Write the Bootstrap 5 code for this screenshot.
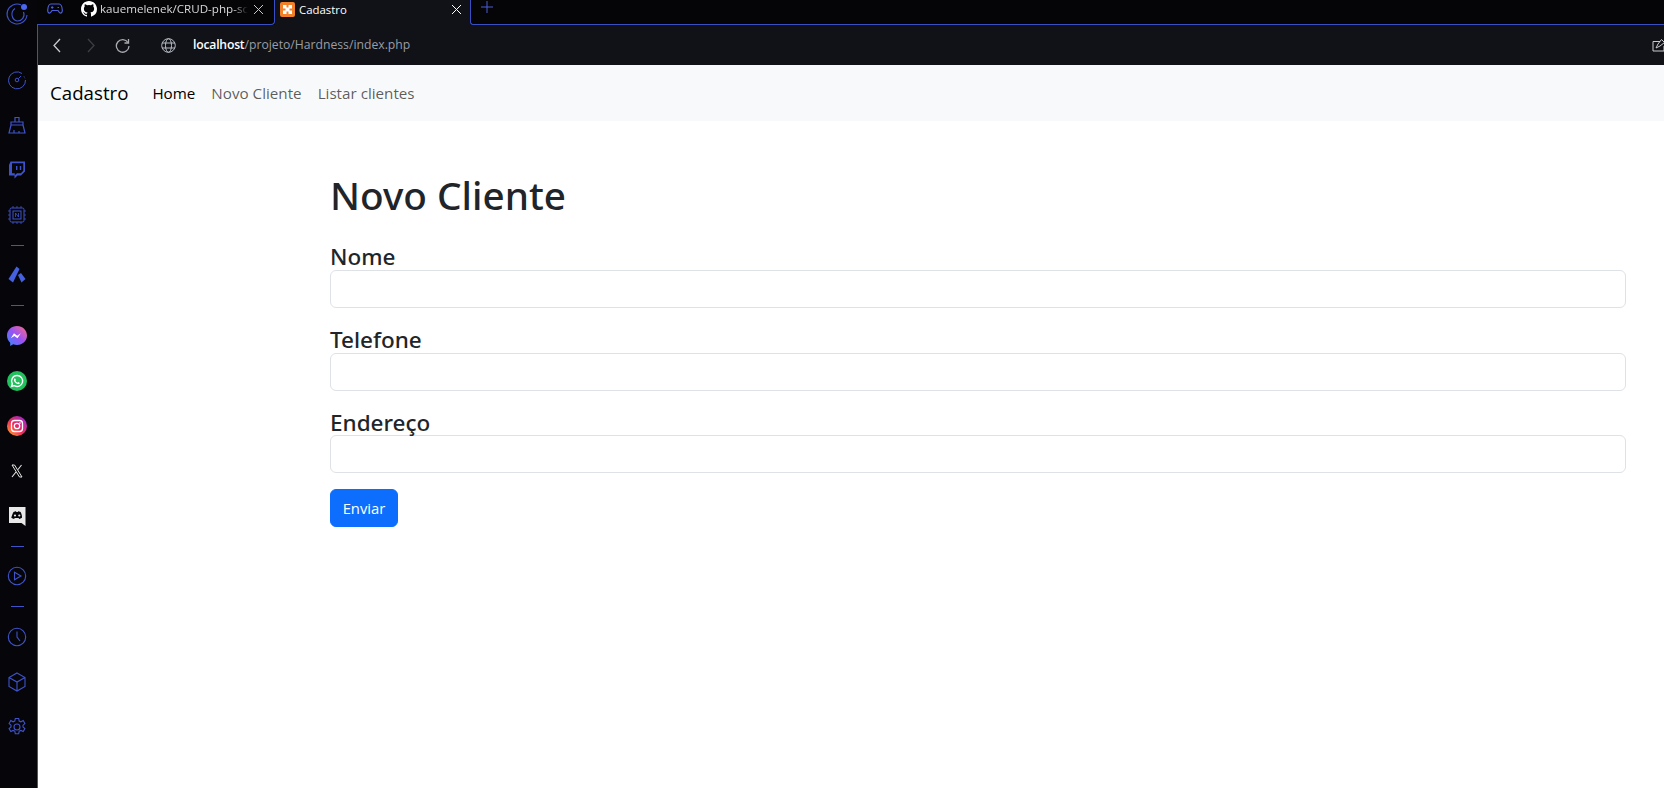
<!DOCTYPE html>
<html lang="pt-BR">
<head>
    <meta charset="UTF-8" />
    <title>Cadastro</title>
    <meta name="viewport" content="width=device-width, initial-scale=1" />
    <link href="https://cdn.jsdelivr.net/npm/bootstrap@5.3.2/dist/css/bootstrap.min.css" rel="stylesheet">
    <style>
        html, body { height: 100%; overflow: hidden; }
        body { background: #06060a; font-family: "Open Sans", "Noto Sans", sans-serif; }
        .side-rail { width: 37px; flex: none; background: #06060a; color: #3f53c9; padding-right: 3px; }
        .rail-logo { height: 28px; flex: none; }
        .rail-gap { height: 29px; flex: none; }
        .rail-item { height: 45.2px; width: 100%; flex: none; }
        .rail-dash { height: 16px; margin: -0.5px 0; flex: none; }
        .rail-dash::before { content: ""; width: 13px; height: 1px; background: #3f53c9; }
        .rail-item svg { width: 20px; height: 20px; }
        .main-pane { min-width: 0; }
        .tab-strip { height: 25px; background: #050508; color: #fff; font-size: 11.6px; }
        .tab-idle { width: 238px; height: 25px; border-bottom: 1px solid #3a4fc4; border-right: 1px solid #3a4fc4; border-bottom-right-radius: 4px; padding: 0 0 6px 10px; }
        .tab-now { width: 195px; height: 25px; background: #101218; padding: 0 0 6px 5px; }
        .tab-now span { font-size: 11.4px; }
        .tab-rest { height: 25px; border-bottom: 1px solid #3a4fc4; border-left: 1px solid #3a4fc4; border-bottom-left-radius: 3px; padding: 1px 0 0 10px; }
        .tab-title { overflow: hidden; white-space: nowrap; color: #d8d8d8; margin-left: 3px;
            -webkit-mask-image: linear-gradient(90deg, #000 90%, transparent); mask-image: linear-gradient(90deg, #000 90%, transparent); }
        .addr-bar { height: 40px; background: #101218; border-left: 1px solid #3a4fc4; color: #b9bcc4; padding-left: 14px; }
        .addr-text { font-size: 12.2px; color: #9a9da5; margin-left: 17px; }
        .addr-text b { color: #fff; font-weight: 600; letter-spacing: -0.2px; }
        .page-area { background: #fff; border-left: 1px solid #3a4fc4; min-height: 0; }
        .top-nav { height: 56px; padding: 1px 12px 0; }
        .top-nav .navbar-brand { font-size: 18.7px; margin-right: 16px; padding: 0; }
        .top-nav .nav-link { font-size: 15.2px; padding: 8px; }
        .form-wrap { margin: 50px 0 0 292px; width: 1296px; font-family: "Noto Sans", "Open Sans", sans-serif; }
        .form-wrap h1 { font-size: 38.7px; font-weight: 500; line-height: 48px; margin-bottom: 22px; color: #212529; }
        .field-label { display: block; font-size: 22.5px; font-weight: 500; line-height: 24.8px; padding-top: 4px; color: #212529; }
        .form-wrap .form-control { height: 38px; }
        .form-wrap .btn { height: 38px; width: 68px; padding: 0; font-size: 14.8px; font-family: "Open Sans", sans-serif; }
    </style>
</head>
<body class="d-flex">

<!-- Browser side rail -->
<aside class="side-rail d-flex flex-column align-items-center">
    <div class="rail-logo d-flex align-items-center justify-content-center w-100">
        <svg width="24" height="24" viewBox="0 0 24 24" fill="none" stroke="#3f53c9" stroke-width="1.100"><path d="M16 2.800A10 10 0 1 0 22 13"/><path d="M10 6.500A7 7 0 0 0 12 19A6.500 6.500 0 0 0 18.500 10"/><circle cx="19" cy="5" r="3" fill="#4a66f0" stroke="none"/></svg>
    </div>
    <div class="rail-gap"></div>
    <div class="rail-item d-flex align-items-center justify-content-center">
        <svg viewBox="0 0 20 20" fill="none" stroke="currentColor" stroke-width="1"><path d="M15 3.500A8.500 8.500 0 1 0 18.500 10" /><circle cx="10" cy="10" r="1.800"/><path d="M11.500 8.500L14 6"/><path d="M17 6.500l1 2" stroke-dasharray="1 1"/></svg>
    </div>
    <div class="rail-item d-flex align-items-center justify-content-center">
        <svg viewBox="0 0 20 20" fill="none" stroke="currentColor" stroke-width="1.200"><path d="M8 7V2.500h4V7M4 7h12v3H4zM4 10L2 18h16l-2-8M7 18v-3M12 18v-2"/></svg>
    </div>
    <div class="rail-item d-flex align-items-center justify-content-center">
        <svg viewBox="0 0 20 20" fill="#3f53c9"><path d="M3.500 1.500H18v10l-4 4h-3.500L7.500 18.500V15.500H2V5z"/><path fill="#06060a" d="M5 3.200h11.300v7.500l-2.500 2.500H10L7.800 15.300v-2.100H5z"/><path d="M9 6h1.400v4H9zM12.800 6h1.400v4h-1.400z"/></svg>
    </div>
    <div class="rail-item d-flex align-items-center justify-content-center">
        <svg viewBox="0 0 20 20" fill="none" stroke="currentColor" stroke-width="1"><rect x="3" y="3" width="14" height="14" rx="1.500"/><rect x="6" y="6" width="8" height="8"/><path d="M8.500 12V8l3 4V8" stroke-width=".8"/><path d="M1 6h2M1 10h2M1 14h2M17 6h2M17 10h2M17 14h2M6 1v2M10 1v2M14 1v2M6 17v2M10 17v2M14 17v2" stroke-width=".8"/></svg>
    </div>
    <div class="rail-dash d-flex align-items-center justify-content-center w-100"></div>
    <div class="rail-item d-flex align-items-center justify-content-center">
        <svg viewBox="0 0 20 20" fill="#4561e0"><path d="M9.500 1.500l3 2.500L6 17.500 1.500 14z"/><path d="M11 10l3-2 4.500 6-4 3.500z"/></svg>
    </div>
    <div class="rail-dash d-flex align-items-center justify-content-center w-100"></div>
    <div class="rail-item d-flex align-items-center justify-content-center">
        <svg viewBox="0 0 20 20"><defs><linearGradient id="msgr" x1="0" y1="1" x2="1" y2="0"><stop offset="0" stop-color="#2f8bff"/><stop offset=".5" stop-color="#9a52f5"/><stop offset="1" stop-color="#ff6a80"/></linearGradient></defs><path fill="url(#msgr)" d="M10 0C4.400 0 0 4.100 0 9.600c0 2.900 1.200 5.400 3.200 7.100V20l3-1.700c1.200.4 2.500.7 3.800.7 5.600 0 10-4 10-9.400S15.600 0 10 0z"/><path fill="#fff" d="M3.800 12.300L7 7.300l3.200 2.400 3.600-2.400-3.300 5-3.100-2.400z"/></svg>
    </div>
    <div class="rail-item d-flex align-items-center justify-content-center">
        <svg viewBox="0 0 20 20"><circle cx="10" cy="10" r="10" fill="#22c15e"/><path fill="none" stroke="#fff" stroke-width="1.400" d="M10 4.500a5.500 5.500 0 0 0-4.700 8.300L4.500 15.500l2.800-.8A5.500 5.500 0 1 0 10 4.500z"/><path fill="#fff" d="M8 7.200l1 1.800-.6.800c.5 1 1.100 1.500 2 1.900l.8-.7 1.700 1c-.4 1-1.200 1.300-2 1.100-2.300-.6-3.700-2.200-4-3.900 0-1 .5-1.800 1.100-2z"/></svg>
    </div>
    <div class="rail-item d-flex align-items-center justify-content-center">
        <svg viewBox="0 0 20 20"><defs><linearGradient id="insta" x1="0" y1="1" x2="1" y2="0"><stop offset="0" stop-color="#fdb52a"/><stop offset=".45" stop-color="#ee2a5c"/><stop offset="1" stop-color="#8a2be2"/></linearGradient></defs><circle cx="10" cy="10" r="10" fill="url(#insta)"/><rect x="4.500" y="4.500" width="11" height="11" rx="3" fill="none" stroke="#fff" stroke-width="1.300"/><circle cx="10" cy="10" r="2.700" fill="none" stroke="#fff" stroke-width="1.300"/><circle cx="13" cy="7" r=".8" fill="#fff"/></svg>
    </div>
    <div class="rail-item d-flex align-items-center justify-content-center">
        <svg viewBox="0 0 20 20" fill="none" stroke="#e6e6e6"><path d="M5 4h2.500L15 16h-2.500z" stroke-width="1"/><path d="M14.500 4L11 8.500M9 11l-4 5" stroke-width="1.100"/></svg>
    </div>
    <div class="rail-item d-flex align-items-center justify-content-center">
        <svg viewBox="0 0 20 20"><path fill="#e8e8e8" d="M2 1h16.500v19l-4-3H2z"/><path fill="#06060a" d="M6.500 6c1-.4 2-.7 2.500-.7l.3.6h1.500l.3-.6c.6 0 1.600.3 2.500.7 1.100 1.900 1.500 3.900 1.400 5.700-.9.700-1.900 1.100-2.800 1.200l-.6-1h-3.900l-.6 1c-.9-.1-1.900-.5-2.800-1.200C4.900 9.900 5.300 7.900 6.500 6z"/><circle cx="8" cy="9.500" r="1.100" fill="#e8e8e8"/><circle cx="12.300" cy="9.500" r="1.100" fill="#e8e8e8"/></svg>
    </div>
    <div class="rail-dash d-flex align-items-center justify-content-center w-100"></div>
    <div class="rail-item d-flex align-items-center justify-content-center">
        <svg viewBox="0 0 20 20" fill="none" stroke="currentColor" stroke-width="1.100"><circle cx="10" cy="10" r="8.700"/><path d="M7.500 6.200v7.600L14 10z"/></svg>
    </div>
    <div class="rail-dash d-flex align-items-center justify-content-center w-100"></div>
    <div class="rail-item d-flex align-items-center justify-content-center">
        <svg viewBox="0 0 20 20" fill="none" stroke="currentColor" stroke-width="1.100"><circle cx="10" cy="10" r="8.700"/><path d="M10 4.500V10l3 4"/></svg>
    </div>
    <div class="rail-item d-flex align-items-center justify-content-center">
        <svg viewBox="0 0 20 20" fill="none" stroke="currentColor" stroke-width="1.100"><path d="M10 1l8 4.500v9L10 19l-8-4.500v-9zM2 5.500L10 10l8-4.500M10 10v9"/></svg>
    </div>
    <div class="rail-item d-flex align-items-center justify-content-center">
        <svg viewBox="0 0 20 20" fill="none" stroke="currentColor" stroke-width="1.100"><circle cx="10" cy="10" r="3"/><path d="M8.300 1.500h3.400l.5 2.500 1.700.8 2.300-1.200 1.700 3-1.900 1.600v1.800l1.900 1.600-1.700 3-2.300-1.200-1.700.8-.5 2.500H8.300l-.5-2.500-1.700-.8-2.300 1.200-1.700-3 1.900-1.600V8.200L2.100 6.600l1.700-3 2.300 1.200 1.700-.8z"/></svg>
    </div>
</aside>

<div class="main-pane flex-grow-1 d-flex flex-column">
    <!-- Tabs -->
    <div class="tab-strip d-flex">
        <div class="tab-idle d-flex align-items-center">
            <svg width="16" height="12" viewBox="0 0 16 12" fill="none" stroke="#4a5fd8" stroke-width="1.200"><path d="M4 1h8c2 0 3 2 3.300 6 .2 3-2 4-3.300 2l-1-1.500H5L4 9c-1.300 2-3.500 1-3.300-2C1 3 2 1 4 1z"/><path d="M4 4.500h2.500M5.200 3.200v2.600M10.500 4.500h1.500"/></svg>
            <svg style="margin-left:18px" class="flex-shrink-0" width="16" height="16" viewBox="0 0 16 16" fill="#fff"><path d="M8 0C3.580 0 0 3.580 0 8c0 3.540 2.290 6.530 5.470 7.590.4.070.55-.17.55-.38v-1.340c-2.230.48-2.700-1.070-2.700-1.070-.36-.92-.89-1.170-.89-1.170-.73-.5.050-.49.050-.49.800.06 1.230.83 1.230.83.710 1.220 1.870.87 2.330.66.070-.52.280-.87.510-1.070-1.780-.2-3.640-.89-3.640-3.950 0-.87.310-1.590.82-2.150-.08-.2-.36-1.020.08-2.120 0 0 .67-.21 2.200.82a7.600 7.600 0 0 1 4 0c1.530-1.040 2.200-.82 2.200-.82.44 1.100.16 1.920.08 2.120.51.560.82 1.270.82 2.150 0 3.070-1.870 3.750-3.650 3.950.29.250.54.730.54 1.480v2.200c0 .21.150.46.550.38A8.010 8.010 0 0 0 16 8c0-4.420-3.580-8-8-8z"/></svg>
            <span class="tab-title">kauemelenek/CRUD-php-sc</span>
            <svg class="ms-auto" style="margin-right:10px" width="11" height="11" viewBox="0 0 11 11" stroke="#c8c8c8" stroke-width="1"><path d="M1 1l9 9M10 1l-9 9"/></svg>
        </div>
        <div class="tab-now d-flex align-items-center">
            <svg width="15" height="15" viewBox="0 0 15 15"><rect width="15" height="15" rx="2" fill="#f0802a"/><path d="M3 3h3.500v2.500h2V3H12v3.500H9.500v2H12V12H8.500V9.500h-2V12H3V8.500h2.500v-2H3z" fill="#fff"/></svg>
            <span class="ms-1">Cadastro</span>
            <svg class="ms-auto me-2" width="11" height="11" viewBox="0 0 11 11" stroke="#fff" stroke-width="1"><path d="M1 1l9 9M10 1l-9 9"/></svg>
        </div>
        <div class="tab-rest flex-grow-1">
            <svg class="d-block" width="12" height="12" viewBox="0 0 12 12" stroke="#4a5fd8" stroke-width="1"><path d="M6 0v12M0 6h12"/></svg>
        </div>
    </div>
    <!-- Address bar -->
    <div class="addr-bar d-flex align-items-center">
        <svg width="10" height="15" viewBox="0 0 10 15" fill="none" stroke="#c8cad0" stroke-width="1.300"><path d="M8 1L2 7.500 8 14"/></svg>
        <svg class="ms-4" width="10" height="15" viewBox="0 0 10 15" fill="none" stroke="#3c3e44" stroke-width="1.300"><path d="M2 1l6 6.500L2 14"/></svg>
        <svg style="margin-left:19px" width="15" height="15" viewBox="0 0 15 15" fill="none" stroke="#a8abb2" stroke-width="1.300"><path d="M13 4.500A6.300 6.300 0 1 0 14 8"/><path d="M13.500 1v4h-4"/></svg>
        <svg style="margin-left:31px" width="15" height="15" viewBox="0 0 15 15" fill="none" stroke="#b9bcc4" stroke-width="1"><circle cx="7.500" cy="7.500" r="6.800"/><ellipse cx="7.500" cy="7.500" rx="3" ry="6.800"/><path d="M1 5h13M1 10h13"/></svg>
        <span class="addr-text"><b>localhost</b>/projeto/Hardness/index.php</span>
        <svg class="ms-auto" width="13" height="14" viewBox="0 0 13 14" fill="none" stroke="#c8cad0" style="margin-right:-1px"><path d="M8 3.500H1v9.500h11V8"/><path d="M4 10l2-4 3.500-4.500 3 3L8 8z"/></svg>
    </div>
    <!-- Page -->
    <div class="page-area flex-grow-1">
        <nav class="navbar navbar-expand-lg bg-light top-nav">
            <a class="navbar-brand" href="#">Cadastro</a>
            <ul class="navbar-nav">
                <li class="nav-item"><a class="nav-link active" href="#">Home</a></li>
                <li class="nav-item"><a class="nav-link" href="#">Novo Cliente</a></li>
                <li class="nav-item"><a class="nav-link" href="#">Listar clientes</a></li>
            </ul>
        </nav>
        <div class="form-wrap">
            <h1>Novo Cliente</h1>
            <form>
                <div class="mb-3">
                    <label class="field-label" for="nome">Nome</label>
                    <input class="form-control" id="nome" type="text">
                </div>
                <div class="mb-3">
                    <label class="field-label" for="telefone">Telefone</label>
                    <input class="form-control" id="telefone" type="text">
                </div>
                <div class="mb-3">
                    <label class="field-label" for="endereco">Endereço</label>
                    <input class="form-control" id="endereco" type="text">
                </div>
                <button type="submit" class="btn btn-primary">Enviar</button>
            </form>
        </div>
    </div>
</div>

<script src="https://cdn.jsdelivr.net/npm/bootstrap@5.3.2/dist/js/bootstrap.bundle.min.js"></script>
</body>
</html>
